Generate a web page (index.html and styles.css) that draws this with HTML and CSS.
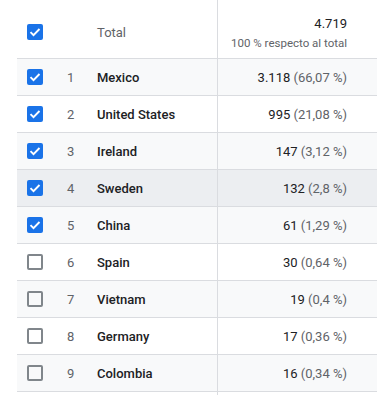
FILE: index.html
```html
<!DOCTYPE html>
<html>
<head>
<meta charset="utf-8">
<link rel="stylesheet" href="styles.css">
</head>
<body>
<div class="table">
  <div class="row header">
    <div class="dim head">
      <span class="cb on"><svg viewBox="0 0 16 16"><path d="M3.5 8.2l3 3 6-6.2" fill="none" stroke="#fff" stroke-width="1.9"/></svg></span>
      <span class="rank"></span>
      <span class="total">Total</span>
    </div>
    <div class="metric head">
      <div class="big">4.719</div>
      <div class="sub">100 % respecto al total</div>
    </div>
  </div>
  <div class="row alt">
    <div class="dim"><span class="cb on"><svg viewBox="0 0 16 16"><path d="M3.5 8.2l3 3 6-6.2" fill="none" stroke="#fff" stroke-width="1.9"/></svg></span><span class="rank">1</span><span class="name">Mexico</span></div>
    <div class="metric"><span><span class="val">3.118</span> <span class="pct">(66,07 %)</span></span></div>
  </div>
  <div class="row">
    <div class="dim"><span class="cb on"><svg viewBox="0 0 16 16"><path d="M3.5 8.2l3 3 6-6.2" fill="none" stroke="#fff" stroke-width="1.9"/></svg></span><span class="rank">2</span><span class="name">United States</span></div>
    <div class="metric"><span><span class="val">995</span> <span class="pct">(21,08 %)</span></span></div>
  </div>
  <div class="row alt">
    <div class="dim"><span class="cb on"><svg viewBox="0 0 16 16"><path d="M3.5 8.2l3 3 6-6.2" fill="none" stroke="#fff" stroke-width="1.9"/></svg></span><span class="rank">3</span><span class="name">Ireland</span></div>
    <div class="metric"><span><span class="val">147</span> <span class="pct">(3,12 %)</span></span></div>
  </div>
  <div class="row hover">
    <div class="dim"><span class="cb on"><svg viewBox="0 0 16 16"><path d="M3.5 8.2l3 3 6-6.2" fill="none" stroke="#fff" stroke-width="1.9"/></svg></span><span class="rank">4</span><span class="name">Sweden</span></div>
    <div class="metric"><span><span class="val">132</span> <span class="pct">(2,8 %)</span></span></div>
  </div>
  <div class="row alt">
    <div class="dim"><span class="cb on"><svg viewBox="0 0 16 16"><path d="M3.5 8.2l3 3 6-6.2" fill="none" stroke="#fff" stroke-width="1.9"/></svg></span><span class="rank">5</span><span class="name">China</span></div>
    <div class="metric"><span><span class="val">61</span> <span class="pct">(1,29 %)</span></span></div>
  </div>
  <div class="row">
    <div class="dim"><span class="cb"></span><span class="rank">6</span><span class="name">Spain</span></div>
    <div class="metric"><span><span class="val">30</span> <span class="pct">(0,64 %)</span></span></div>
  </div>
  <div class="row alt">
    <div class="dim"><span class="cb"></span><span class="rank">7</span><span class="name">Vietnam</span></div>
    <div class="metric"><span><span class="val">19</span> <span class="pct">(0,4 %)</span></span></div>
  </div>
  <div class="row">
    <div class="dim"><span class="cb"></span><span class="rank">8</span><span class="name">Germany</span></div>
    <div class="metric"><span><span class="val">17</span> <span class="pct">(0,36 %)</span></span></div>
  </div>
  <div class="row alt">
    <div class="dim"><span class="cb"></span><span class="rank">9</span><span class="name">Colombia</span></div>
    <div class="metric"><span><span class="val">16</span> <span class="pct">(0,34 %)</span></span></div>
  </div>
  <div class="row">
    <div class="dim"></div>
    <div class="metric"></div>
  </div>
</div>
</body>
</html>
```
FILE: styles.css
```css
html, body {
  margin: 0;
  padding: 0;
  background: #fff;
  font-family: Roboto, "Liberation Sans", sans-serif;
  overflow: hidden;
}
.table {
  margin-left: 17px;
  width: 360px;
}
.row {
  display: grid;
  grid-template-columns: 201px 1fr;
  height: 37px;
  box-sizing: border-box;
  border-bottom: 1px solid #dadce0;
}
.row.header {
  height: 59px;
}
.row.alt {
  background: #f8f9fa;
}
.row.hover {
  background: #eceef1;
}
.dim {
  display: flex;
  align-items: center;
  border-right: 1px solid #dadce0;
  font-size: 13px;
}
.dim.head {
  padding-top: 6px;
}
.cb {
  width: 16px;
  height: 16px;
  box-sizing: border-box;
  margin-left: 10px;
  border: 2px solid #80868b;
  border-radius: 2px;
  flex: none;
  display: block;
}
.cb.on {
  background: #1a73e8;
  border: none;
}
.cb svg {
  display: block;
  width: 16px;
  height: 16px;
}
.rank {
  padding-left: 24px;
  box-sizing: border-box;
  color: #5f6368;
  width: 54px;
}
.total {
  color: #5f6368;
  font-size: 13px;
}
.name {
  color: #202124;
  font-weight: 500;
}
.metric {
  display: flex;
  align-items: center;
  justify-content: flex-end;
  padding-right: 30px;
  font-size: 13px;
  white-space: pre;
}
.metric.head {
  flex-direction: column;
  align-items: flex-end;
  justify-content: flex-start;
  padding-top: 15px;
}
.big {
  color: #202124;
  line-height: 18px;
}
.sub {
  color: #5f6368;
  font-size: 11.5px;
  line-height: 16px;
  margin-top: 2px;
}
.val {
  color: #202124;
}
.pct {
  color: #5f6368;
}
```
